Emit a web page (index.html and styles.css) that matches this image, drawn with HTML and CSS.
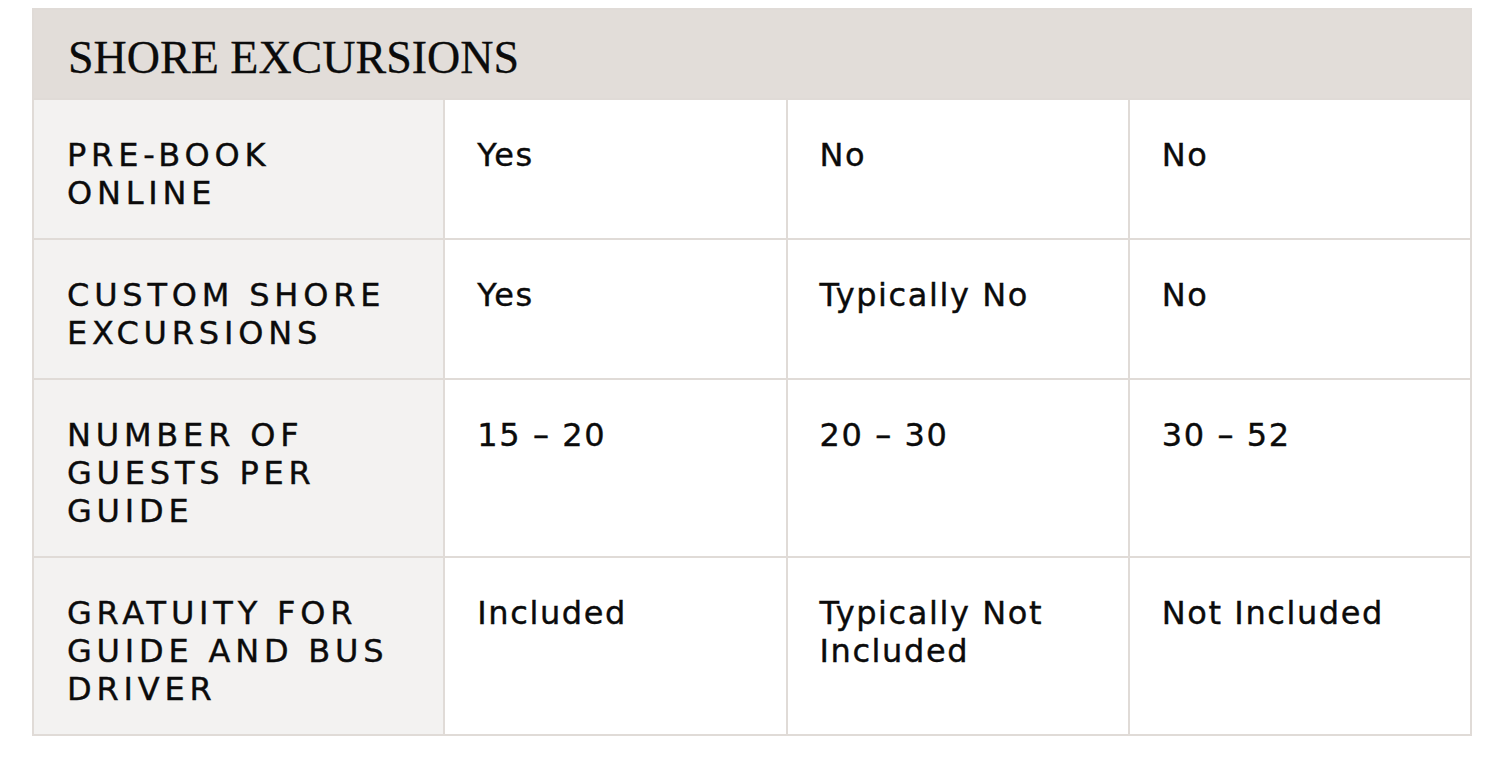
FILE: index.html
```html
<!DOCTYPE html>
<html lang="en">
<head>
<meta charset="utf-8">
<title>Shore Excursions</title>
<link rel="stylesheet" href="styles.css">
</head>
<body>
<table class="compare">
  <colgroup>
    <col class="col-label">
    <col class="col-data">
    <col class="col-data">
    <col class="col-data">
  </colgroup>
  <thead>
    <tr><th class="title" colspan="4">SHORE EXCURSIONS</th></tr>
  </thead>
  <tbody>
    <tr>
      <th class="label">PRE-BOOK<br>ONLINE</th>
      <td>Yes</td><td>No</td><td>No</td>
    </tr>
    <tr>
      <th class="label">CUSTOM SHORE<br>EXCURSIONS</th>
      <td>Yes</td><td>Typically No</td><td>No</td>
    </tr>
    <tr>
      <th class="label">NUMBER OF<br>GUESTS PER<br>GUIDE</th>
      <td>15 – 20</td><td>20 – 30</td><td>30 – 52</td>
    </tr>
    <tr>
      <th class="label">GRATUITY FOR<br>GUIDE AND BUS<br>DRIVER</th>
      <td>Included</td><td>Typically Not<br>Included</td><td>Not Included</td>
    </tr>
  </tbody>
</table>
</body>
</html>
```
FILE: styles.css
```css
html, body {
  margin: 0;
  padding: 0;
  background: #ffffff;
}
body {
  padding: 8px 0 0 32px;
}
.compare {
  border-collapse: collapse;
  table-layout: fixed;
  width: 1440px;
  color: #0b0b0b;
  font-family: "DejaVu Sans", "Liberation Sans", sans-serif;
}
.col-label { width: 411px; }
.col-data { width: 342px; }
.compare th,
.compare td {
  border: 2px solid #e0dbd7;
  text-align: left;
  vertical-align: top;
  font-weight: normal;
  font-size: 32px;
  line-height: 38px;
  padding: 36px 30px 26px 33px;
  -webkit-text-stroke: 0.4px #0b0b0b;
}
.compare td {
  letter-spacing: 1.6px;
  background: #ffffff;
  padding-left: 32px;
}
.compare .label {
  background: #f3f2f1;
  letter-spacing: 4.8px;
}
.compare .title {
  background: #e2ddd9;
  font-family: "Liberation Serif", "Times New Roman", serif;
  font-size: 46px;
  line-height: 48px;
  letter-spacing: 0;
  padding: 24px 33px 16px 34px;
  height: 48px;
  -webkit-text-stroke: 0.3px #0b0b0b;
}
```
